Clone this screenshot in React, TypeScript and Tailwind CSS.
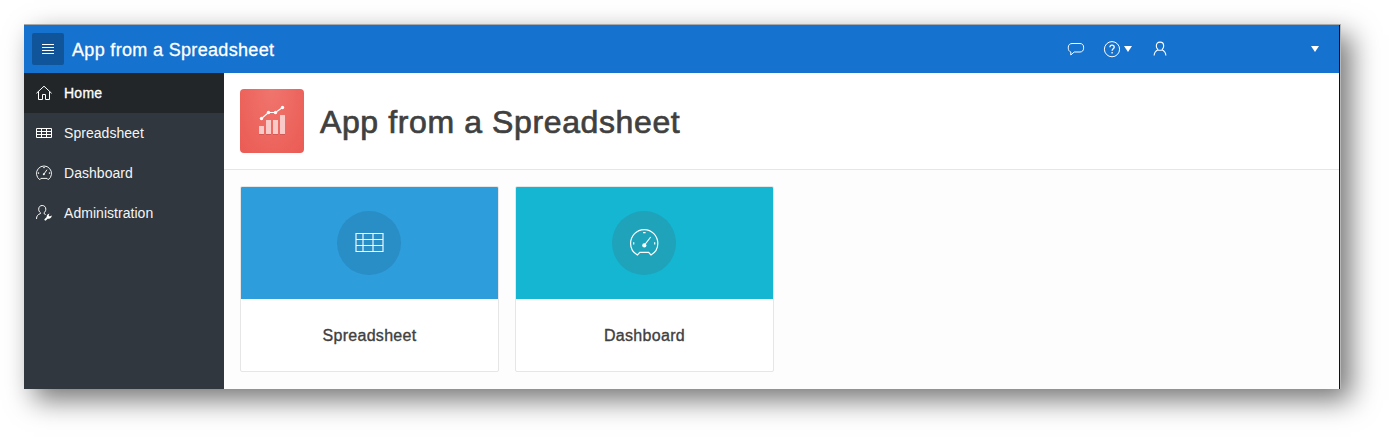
import React from "react";

const MenuIcon = () => (
  <svg width="16" height="16" viewBox="0 0 16 16" stroke="#fff" fill="none">
    <path d="M2 3.5h12M2 6.5h12M2 9.5h12M2 12.5h12" />
  </svg>
);

const HomeIcon = () => (
  <svg width="16" height="16" viewBox="0 0 16 16" stroke="#fff" fill="none">
    <path d="M.4 8.3 8 1.2l7.6 7.1M2.5 6.6v7.9h4V9.5h3v5h4V6.6" />
  </svg>
);

const GridIcon = () => (
  <svg width="16" height="16" viewBox="0 0 16 16" stroke="#fff" fill="none">
    <path d="M.5 3.5h15v9H.5zM.5 6.5h15M.5 9.5h15M5.5 3.5v9M10.5 3.5v9" />
  </svg>
);

const GaugeIcon = () => (
  <svg width="16" height="16" viewBox="0 0 16 16" stroke="#fff" fill="none" strokeWidth=".95">
    <path d="M3.8 14.7a7.5 7.5 0 1 1 8.4 0l-1.1-1.3H4.9z" />
    <path d="m8 9 3-4.3M7.2 2.6h1.6M2.6 7.3v1.6M13.4 7.3v1.6" />
    <circle cx="7.8" cy="9.2" r="1" fill="#fff" stroke="none" />
  </svg>
);

const AdminIcon = () => (
  <svg width="16" height="16" viewBox="0 0 16 16" stroke="#fff" fill="none">
    <path d="M4.4 7.6C3.2 6.8 2.7 5.6 2.7 4.2 2.7 2 4 .5 6.2.5s3.6 1.5 3.6 3.7c0 1.6-.7 2.8-1.8 3.5M4.4 7.6v1C2 9.4.5 10.8.5 14M8 7.7v.8l1.6 1.1" />
    <path d="M9.4 14.6l3-3" strokeWidth="2" strokeLinecap="round" />
    <path d="M11.1 12.8c-1-1.5-.2-3.9 2.4-4.3l-1 2.1 1 1 2.3-1.1c0 2.2-2.1 3.7-3.9 3z" fill="#fff" stroke="none" />
  </svg>
);

const ChatIcon = () => (
  <svg width="18" height="16" viewBox="0 0 18 16" stroke="#fff" fill="none">
    <path d="M5 2.5h8c2.2 0 3.6 1.5 3.6 3.7v1c0 2.3-1.4 3.8-3.6 3.8H7.2L3.8 14V11C2.1 10.3 1.3 9.1 1.3 7.2v-1C1.3 4 2.8 2.5 5 2.5z" />
  </svg>
);

const HelpIcon = () => (
  <svg width="17" height="17" viewBox="0 0 17 17" stroke="#fff" fill="none">
    <circle cx="9" cy="8.2" r="7.6" />
    <path d="M6.9 6.3c0-1.3.8-2.1 2.1-2.1s2.2.8 2.2 2c0 1.6-2.1 1.6-2.1 3.5M9.1 11.1v1.5" strokeWidth="1.3" />
  </svg>
);

const UserIcon = () => (
  <svg width="16" height="16" viewBox="0 0 16 16" stroke="#fff" fill="none" strokeWidth="1.1">
    <path d="M6.1 8.7C4.9 7.8 4.3 6.5 4.3 5c0-2.4 1.4-3.9 3.7-3.9S11.7 2.6 11.7 5c0 1.5-.6 2.8-1.8 3.7M6.1 8.7C3.8 9.7 2.3 11.3 2.1 14.5M9.9 8.7c2.3 1 3.8 2.6 4 5.8M6.1 9.2h3.8" />
  </svg>
);

const Caret = () => (
  <svg width="8" height="6" viewBox="0 0 8 6" fill="#fff">
    <path d="M0 0h8L4 6z" />
  </svg>
);

const AppLogo = () => (
  <svg width="32" height="32" viewBox="0 0 32 32">
    <path d="M3 29h5v1H3zM10 29h5v1h-5zM17 29h5v1h-5zM24 29h5v1h-5z" fill="#000" opacity=".12" />
    <path d="M3 21h5v8H3zM10 15h5v14h-5zM17 15h5v14h-5zM24 10h5v19h-5z" fill="#fff" opacity=".65" />
    <path d="m5.5 13.5 7-6h7l7-5" stroke="#fff" strokeWidth="1.2" fill="none" />
    <g fill="#fff">
      <circle cx="5.5" cy="13.5" r="1.7" />
      <circle cx="12.5" cy="7.5" r="1.7" />
      <circle cx="19.5" cy="7.5" r="1.7" />
      <circle cx="26.5" cy="2.5" r="1.7" />
    </g>
  </svg>
);

const LargeGrid = () => (
  <svg width="32" height="32" viewBox="0 0 32 32" fill="none">
    <path d="M3 6v19M10 6v19M20 6v19M30 6v19" stroke="#fff" strokeOpacity=".55" strokeWidth="2" />
    <path d="M3 6.5h27M3 12.5h27M3 18.5h27M3 24.5h27" stroke="#fff" />
  </svg>
);

const LargeGauge = () => (
  <svg width="32" height="32" viewBox="0 0 32 32" fill="none" stroke="#fff" strokeWidth="1.2">
    <path d="M9.4 28C5 25.6 2.6 21.4 2.6 16.6 2.6 8.8 8.6 2.6 16.2 2.6s13.6 6.2 13.6 14c0 4.8-2.4 9-6.8 11.4L20.6 25.4h-8.8z" />
    <path d="m16.5 18 6.2-8M15 5.7h2.6M5.7 15.2v2.4M26.7 15.2v2.4" />
    <circle cx="16.3" cy="18.4" r="2.1" fill="#fff" stroke="none" />
  </svg>
);

const NAV: { label: string; icon: React.ReactNode; active?: boolean }[] = [
  { label: "Home", icon: <HomeIcon />, active: true },
  { label: "Spreadsheet", icon: <GridIcon /> },
  { label: "Dashboard", icon: <GaugeIcon /> },
  { label: "Administration", icon: <AdminIcon /> },
];

const CARDS = [
  { label: "Spreadsheet", banner: "bg-[#2e9ddc]", circle: "bg-[#298dc6]", icon: <LargeGrid /> },
  { label: "Dashboard", banner: "bg-[#15b6d2]", circle: "bg-[#1ea3bb]", icon: <LargeGauge /> },
];

function Header() {
  return (
    <header className="flex h-12 items-center bg-[#1672cf] pl-2 pr-5 text-white">
      <button className="flex h-8 w-8 items-center justify-center rounded-xs bg-[#10549a]" aria-label="Menu">
        <MenuIcon />
      </button>
      <span className="ml-2 whitespace-nowrap pt-0.5 text-[18px] leading-6 tracking-[0.33px] [-webkit-text-stroke:0.3px_#fff]">
        App from a Spreadsheet
      </span>
      <div className="ml-auto flex items-center">
        <ChatIcon />
        <span className="ml-[18px]"><HelpIcon /></span>
        <span className="ml-1"><Caret /></span>
        <span className="ml-5"><UserIcon /></span>
        <span className="ml-[143px]"><Caret /></span>
      </div>
    </header>
  );
}

export default function App() {
  return (
    <div className="h-[437px] w-[1389px] overflow-hidden bg-white p-6 font-['Liberation_Sans',Arial,sans-serif]">
      <div className="flex h-[365px] w-[1317px] flex-col border-r border-t border-r-[#b8b8b8] border-t-[#a9a9a9] shadow-[10px_11px_26px_rgba(0,0,0,0.54)]">
        <div className="flex min-h-0 flex-1 flex-col border-r border-[#111] bg-white">
          <Header />
          <div className="flex min-h-0 flex-1">
            <nav className="w-[200px] shrink-0 bg-[#30373e]">
              {NAV.map((item) => (
                <a
                  key={item.label}
                  className={
                    item.active
                      ? "flex h-10 items-center gap-3 bg-[#222629] pl-3 text-sm tracking-[0.25px] text-white [-webkit-text-stroke:0.3px_#fff]"
                      : "flex h-10 items-center gap-3 pl-3 text-sm tracking-[0.04px] text-[#f4f5f5]"
                  }
                >
                  {item.icon}
                  <span>{item.label}</span>
                </a>
              ))}
            </nav>
            <main className="min-w-0 flex-1 bg-[#fdfdfd]">
              <div className="flex h-[97px] items-center border-b border-[#e6e6e6] bg-white px-4">
                <div className="flex h-16 w-16 items-center justify-center rounded-[4px] bg-radial-[at_50%_0%] from-[#f0756d] to-[#ea5b54]">
                  <AppLogo />
                </div>
                <h1 className="ml-4 pt-0.5 text-[32px] leading-10 tracking-[0.61px] text-[#404040] [-webkit-text-stroke:0.7px_#404040]">
                  App from a Spreadsheet
                </h1>
              </div>
              <div className="flex gap-4 px-4 pt-4">
                {CARDS.map((card) => (
                  <div key={card.label} className="h-[186px] w-[259px] overflow-hidden rounded-[2px] border border-[#e6e6e6] bg-white">
                    <div className={`flex h-28 items-center pl-24 ${card.banner}`}>
                      <div className={`flex h-16 w-16 items-center justify-center rounded-full ${card.circle}`}>
                        {card.icon}
                      </div>
                    </div>
                    <div className="flex h-[72px] items-center justify-center pt-0.5 text-base tracking-[0.3px] text-[#404040] [-webkit-text-stroke:0.35px_#404040]">
                      {card.label}
                    </div>
                  </div>
                ))}
              </div>
            </main>
          </div>
        </div>
      </div>
    </div>
  );
}
